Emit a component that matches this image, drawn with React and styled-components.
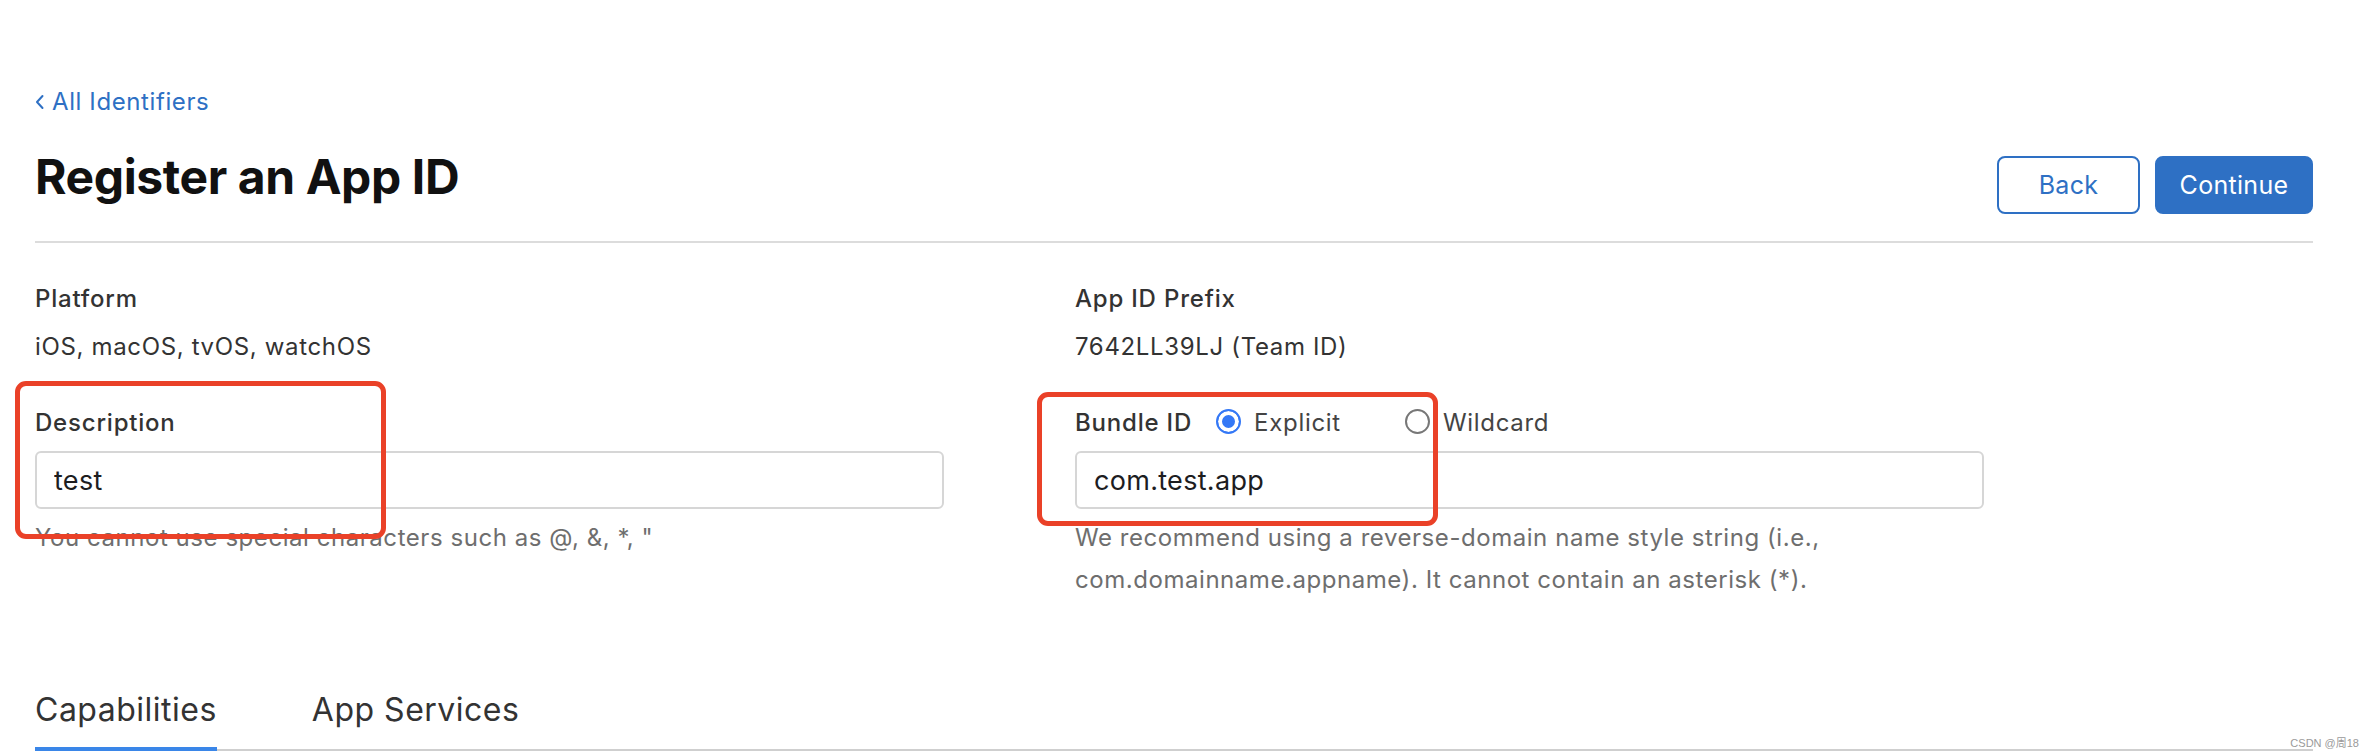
import React from "react";
import styled, { createGlobalStyle } from "styled-components";

const Global = createGlobalStyle`
  html, body { margin: 0; padding: 0; background: #fff; }
  body { font-family: Inter, "Noto Sans", "Noto Sans CJK SC", sans-serif; color: #333; overflow: hidden; }
  * { box-sizing: border-box; }
`;

const Page = styled.div`
  position: relative;
  width: 2374px;
  height: 756px;
  padding: 87px 61px 0 35px;
`;

const BackLink = styled.a`
  display: inline-flex;
  align-items: center;
  gap: 8px;
  font-size: 24px;
  line-height: 29px;
  letter-spacing: 0.6px;
  color: #2e70c4;
  text-decoration: none;
`;

const Chevron = styled.svg`
  width: 9px;
  height: 16px;
`;

const Header = styled.div`
  display: flex;
  justify-content: space-between;
  align-items: flex-start;
  margin-top: 32px;
`;

const Title = styled.h1`
  margin: 0;
  font-size: 48px;
  line-height: 58px;
  font-weight: 700;
  color: #111;
  letter-spacing: -0.4px;
`;

const Buttons = styled.div`
  display: flex;
  gap: 15px;
  margin-top: 8px;
`;

const Button = styled.button`
  height: 58px;
  width: ${(p) => p.$w}px;
  padding: 0;
  border-radius: 8px;
  font-family: inherit;
  font-size: 25px;
  letter-spacing: 0.3px;
  border: 2px solid #2e70c4;
  background: ${(p) => (p.$primary ? "#2e70c4" : "#fff")};
  color: ${(p) => (p.$primary ? "#fff" : "#2e70c4")};
`;

const Divider = styled.hr`
  margin: 27px 0 0;
  border: 0;
  height: 2px;
  background: #dcdcdc;
`;

const InfoGrid = styled.div`
  display: grid;
  grid-template-columns: 1040px 1fr;
  margin-top: 38px;
  row-gap: 40px;
`;

const Field = styled.div`
  position: relative;
  display: flex;
  flex-direction: column;
`;

const LabelRow = styled.div`
  display: flex;
  align-items: center;
  height: 36px;
`;

const Label = styled.div`
  font-size: 24px;
  line-height: 36px;
  font-weight: 500;
  letter-spacing: 0.8px;
  color: #333;
`;

const Value = styled.div`
  font-size: 24px;
  line-height: 36px;
  letter-spacing: 0.65px;
  color: #333;
  margin-top: 12px;
`;

const RadioOption = styled.label`
  display: inline-flex;
  align-items: center;
  gap: 13px;
  font-size: 24px;
  line-height: 36px;
  letter-spacing: 0.7px;
  color: #444;
  margin-left: ${(p) => p.$ml}px;
`;

const RadioDot = styled.span`
  width: 25px;
  height: 25px;
  border-radius: 50%;
  margin-top: -4px;
  border: 2px solid ${(p) => (p.$checked ? "#3478f6" : "#777")};
  background: ${(p) => (p.$checked ? "#3478f6" : "#fff")};
  box-shadow: ${(p) => (p.$checked ? "inset 0 0 0 4px #fff" : "none")};
`;

const Input = styled.input`
  margin-top: 10px;
  width: 909px;
  height: 58px;
  border: 2px solid #d6d6d6;
  border-radius: 6px;
  padding: 0 17px;
  font-family: inherit;
  font-size: 27px;
  font-weight: 400;
  letter-spacing: 0.3px;
  color: #1d1d1f;
  outline: none;
`;

const Help = styled.p`
  margin: 8px 0 0;
  font-size: 24px;
  line-height: 42px;
  letter-spacing: 0.55px;
  color: #6e6e6e;
`;

const Annotation = styled.div`
  position: absolute;
  left: ${(p) => p.$x}px;
  top: ${(p) => p.$y}px;
  width: ${(p) => p.$w}px;
  height: ${(p) => p.$h}px;
  border: 5px solid #ea4128;
  border-radius: 11px;
  pointer-events: none;
`;

const Tabs = styled.div`
  display: flex;
  gap: 95px;
  margin-top: 89px;
  border-bottom: 2px solid #cfcfcf;
`;

const Tab = styled.div`
  font-size: 32px;
  line-height: 40px;
  letter-spacing: 0.5px;
  color: #333;
  border-bottom: 4px solid ${(p) => (p.$active ? "#3a86e8" : "transparent")};
  margin-bottom: -2px;
  padding-bottom: 17px;
`;

const Watermark = styled.div`
  position: absolute;
  right: 15px;
  top: 734px;
  font-size: 11px;
  color: #9a9a9a;
  font-family: "Liberation Sans", "Noto Sans CJK SC", sans-serif;
`;

export default function App() {
  return (
    <>
      <Global />
      <Page>
        <BackLink href="#">
          <Chevron viewBox="0 0 9 16">
            <path d="M7.5 2 L2 8 L7.5 14" fill="none" stroke="#2e70c4" strokeWidth="2" strokeLinecap="round" strokeLinejoin="round" />
          </Chevron>
          All Identifiers
        </BackLink>
        <Header>
          <Title>Register an App ID</Title>
          <Buttons>
            <Button $w={143}>Back</Button>
            <Button $w={158} $primary>Continue</Button>
          </Buttons>
        </Header>
        <Divider />
        <InfoGrid>
          <Field>
            <Label>Platform</Label>
            <Value>iOS, macOS, tvOS, watchOS</Value>
          </Field>
          <Field>
            <Label>App ID Prefix</Label>
            <Value>7642LL39LJ (Team ID)</Value>
          </Field>
          <Field>
            <LabelRow>
              <Label>Description</Label>
            </LabelRow>
            <Input defaultValue="test" readOnly />
            <Help>You cannot use special characters such as @, &amp;, *, "</Help>
            <Annotation $x={-20} $y={-24} $w={371} $h={158} />
          </Field>
          <Field>
            <LabelRow>
              <Label>Bundle ID</Label>
              <RadioOption $ml={24}>
                <RadioDot $checked />
                Explicit
              </RadioOption>
              <RadioOption $ml={64}>
                <RadioDot />
                Wildcard
              </RadioOption>
            </LabelRow>
            <Input defaultValue="com.test.app" readOnly />
            <Help>
              We recommend using a reverse-domain name style string (i.e.,
              <br />
              com.domainname.appname). It cannot contain an asterisk (*).
            </Help>
            <Annotation $x={-38} $y={-13} $w={401} $h={134} />
          </Field>
        </InfoGrid>
        <Tabs>
          <Tab $active>Capabilities</Tab>
          <Tab>App Services</Tab>
        </Tabs>
        <Watermark>CSDN @周18</Watermark>
      </Page>
    </>
  );
}
